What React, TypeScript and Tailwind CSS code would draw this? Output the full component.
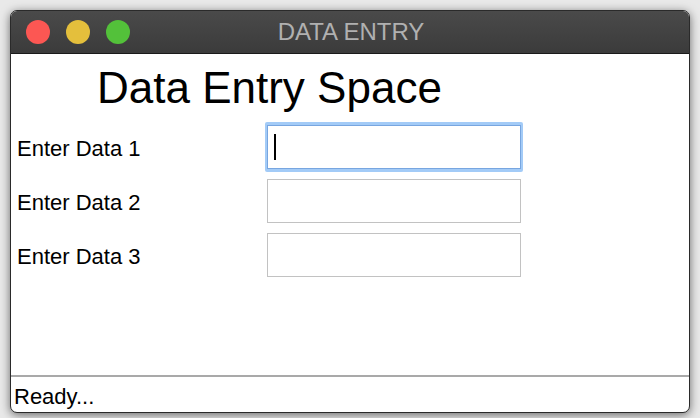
import React from 'react';

const fields = ['Enter Data 1', 'Enter Data 2', 'Enter Data 3'];

const App: React.FC = () => {
  return (
    <div className="w-[700px] h-[418px] bg-[#e9e9e9] pt-[10px] pl-[10px] pr-[10px] pb-[5px] overflow-hidden">
      <div className="w-[680px] h-[403px] flex flex-col rounded-[7px] overflow-hidden border border-[#2a2a2a] bg-white shadow-[0_2px_10px_rgba(0,0,0,0.55)]">
        {/* Title bar */}
        <div className="relative h-[43px] shrink-0 flex items-center bg-gradient-to-b from-[#4a4a4a] to-[#3b3b3b] border-b border-[#1a1a1a]">
          <div className="flex items-center gap-[16px] pl-[15px]">
            <span className="w-[24px] h-[24px] rounded-full bg-[#fc5753]" />
            <span className="w-[24px] h-[24px] rounded-full bg-[#e4bf3c]" />
            <span className="w-[24px] h-[24px] rounded-full bg-[#53c13a]" />
          </div>
          <div className="absolute inset-0 flex items-center justify-center pl-[2px] text-[24px] text-[#b0b0b0] font-['Liberation_Sans',Arial,sans-serif]">
            DATA ENTRY
          </div>
        </div>

        {/* Body */}
        <div className="flex-1 flex flex-col font-['Liberation_Sans',Arial,sans-serif] text-black">
          <div className="pl-[86px] pt-[10px] text-[44px] leading-[48px]">Data Entry Space</div>
          <div className="flex flex-col gap-[10px] pt-[13px] pl-[6px]">
            {fields.map((label, i) => (
              <div key={label} className="flex items-center">
                <div className="w-[250px] text-[22px] pt-[3px]">{label}</div>
                {i === 0 ? (
                  <div className="w-[258px] h-[50px] -ml-[2px] -my-[3px] p-[3px] px-[2px] bg-[#a3cbf7] rounded-[2px]">
                    <div className="w-full h-full bg-white border border-[#78a6e0] flex items-center pl-[6px]">
                      <span className="w-[2px] h-[26px] bg-black" />
                    </div>
                  </div>
                ) : (
                  <div className="w-[254px] h-[44px] bg-white border border-[#c2c2c2]" />
                )}
              </div>
            ))}
          </div>
        </div>

        {/* Status bar */}
        <div className="h-[37px] shrink-0 border-t-2 border-[#a9a9a9] flex items-center pl-[3px] pt-[4px] text-[22px] font-['Liberation_Sans',Arial,sans-serif]">
          Ready...
        </div>
      </div>
    </div>
  );
};

export default App;
